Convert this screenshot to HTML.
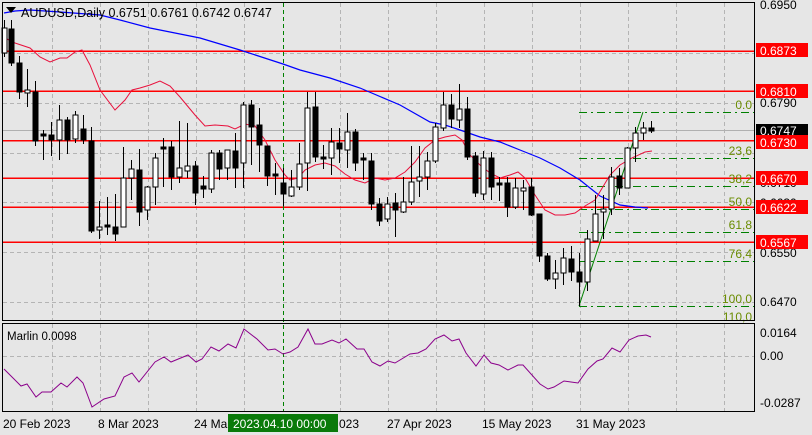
<!DOCTYPE html>
<html><head><meta charset="utf-8"><style>
html,body{margin:0;padding:0;background:#e6e6e6;}
svg{display:block;font-family:"Liberation Sans",sans-serif;}
</style></head><body>
<svg width="812" height="435" viewBox="0 0 812 435" xmlns="http://www.w3.org/2000/svg">
<rect width="812" height="435" fill="#e6e6e6"/>
<g stroke="#b4b4b4" stroke-width="1" stroke-dasharray="4,3" shape-rendering="crispEdges">
<line x1="3" y1="53.5" x2="754" y2="53.5"/><line x1="3" y1="103.5" x2="754" y2="103.5"/><line x1="3" y1="153.5" x2="754" y2="153.5"/><line x1="3" y1="202.5" x2="754" y2="202.5"/><line x1="3" y1="252.5" x2="754" y2="252.5"/><line x1="3" y1="302.5" x2="754" y2="302.5"/>
<line x1="3" y1="356.5" x2="754" y2="356.5"/>
<g>
<line x1="52.5" y1="3" x2="52.5" y2="320"/><line x1="100.5" y1="3" x2="100.5" y2="320"/><line x1="148.5" y1="3" x2="148.5" y2="320"/><line x1="196.5" y1="3" x2="196.5" y2="320"/><line x1="244.5" y1="3" x2="244.5" y2="320"/><line x1="340.5" y1="3" x2="340.5" y2="320"/><line x1="388.5" y1="3" x2="388.5" y2="320"/><line x1="436.5" y1="3" x2="436.5" y2="320"/><line x1="484.5" y1="3" x2="484.5" y2="320"/><line x1="532.5" y1="3" x2="532.5" y2="320"/><line x1="580.5" y1="3" x2="580.5" y2="320"/><line x1="628.5" y1="3" x2="628.5" y2="320"/><line x1="676.5" y1="3" x2="676.5" y2="320"/><line x1="724.5" y1="3" x2="724.5" y2="320"/>
<line x1="52.5" y1="324" x2="52.5" y2="411"/><line x1="100.5" y1="324" x2="100.5" y2="411"/><line x1="148.5" y1="324" x2="148.5" y2="411"/><line x1="196.5" y1="324" x2="196.5" y2="411"/><line x1="244.5" y1="324" x2="244.5" y2="411"/><line x1="340.5" y1="324" x2="340.5" y2="411"/><line x1="388.5" y1="324" x2="388.5" y2="411"/><line x1="436.5" y1="324" x2="436.5" y2="411"/><line x1="484.5" y1="324" x2="484.5" y2="411"/><line x1="532.5" y1="324" x2="532.5" y2="411"/><line x1="580.5" y1="324" x2="580.5" y2="411"/><line x1="628.5" y1="324" x2="628.5" y2="411"/><line x1="676.5" y1="324" x2="676.5" y2="411"/><line x1="724.5" y1="324" x2="724.5" y2="411"/>
</g></g>
<line x1="3" y1="130.5" x2="754" y2="130.5" stroke="#b0b0b0" shape-rendering="crispEdges"/>
<g stroke="#ff0000" stroke-width="1.5" shape-rendering="crispEdges">
<line x1="3" y1="51" x2="754" y2="51"/><line x1="3" y1="91" x2="754" y2="91"/><line x1="3" y1="140.5" x2="754" y2="140.5"/><line x1="3" y1="178" x2="754" y2="178"/><line x1="3" y1="207" x2="754" y2="207"/><line x1="3" y1="242" x2="754" y2="242"/>
</g>
<g stroke="#008000" stroke-width="1" stroke-dasharray="8,4,2,4" shape-rendering="crispEdges">
<line x1="579" y1="112.5" x2="754" y2="112.5"/><line x1="579" y1="158.5" x2="754" y2="158.5"/><line x1="579" y1="186.5" x2="754" y2="186.5"/><line x1="579" y1="209.5" x2="754" y2="209.5"/><line x1="579" y1="232.5" x2="754" y2="232.5"/><line x1="579" y1="261.5" x2="754" y2="261.5"/><line x1="579" y1="306.5" x2="754" y2="306.5"/>
</g>
<line x1="579" y1="306" x2="643" y2="112" stroke="#008000" stroke-width="1"/>
<g fill="#6a8c00" font-size="12" text-anchor="end">
<text x="752" y="109">0.0</text><text x="752" y="155">23,6</text><text x="752" y="183">38,2</text><text x="752" y="206">50,0</text><text x="752" y="229">61,8</text><text x="752" y="258">76,4</text><text x="752" y="303">100,0</text><text x="752" y="321">110,0</text>
</g>
<polyline fill="none" stroke="#0000ff" stroke-width="1.2" points="4,13 15,11 30,10 60,12 100,15 120,20 150,28 200,38 240,50 283,64 300,70 330,78 360,88 400,105 430,122 445,125 460,130 480,137 500,142 520,150 540,158 560,168 580,180 600,196 620,205 635,207 648,208"/>
<polyline fill="none" stroke="#e8103c" stroke-width="1" points="5,38 15,43 30,48 40,57 50,62 60,58 67,58 75,52 82,50 90,65 100,90 115,110 125,100 132,90 140,88 150,85 160,81 170,86 180,97 195,115 205,126 215,125 228,126 235,129 245,124 255,126 265,140 275,160 285,175 290,180 298,178 305,170 315,165 325,163 335,166 345,174 355,180 365,183 375,178 385,180 395,178 405,172 415,162 425,148 435,140 445,137 455,135 462,140 470,155 480,165 490,173 500,178 510,175 518,172 525,178 535,195 545,210 555,215 565,215 575,213 585,206 595,200 610,175 620,165 632,158 645,152 652,151"/>
<line x1="283.5" y1="3" x2="283.5" y2="412" stroke="#008000" stroke-dasharray="4,3" shape-rendering="crispEdges"/>
<g stroke="#000" stroke-width="1" shape-rendering="crispEdges">
<path d="M4.5 20V57M11.5 20V66M19.5 56V99M27.5 69V107M35.5 81V146M43.5 130V160M51.5 122V156M59.5 105V160M67.5 117V154M75.5 111V143M83.5 115V144M91.5 127V233M99.5 201V239M107.5 197V235M115.5 194V241M123.5 147V227M131.5 160V200M139.5 149V226M147.5 186V220M155.5 153V205M163.5 138V187M171.5 141V190M179.5 121V183M187.5 123V178M195.5 161V205M203.5 176V198M211.5 150V193M219.5 150V180M227.5 150V180M235.5 133V188M243.5 102V188M251.5 100V165M259.5 108V172M267.5 147V186M275.5 163V195M283.5 168V206M291.5 170V197M299.5 143V190M307.5 92V191M315.5 92V162M323.5 145V169M331.5 128V175M339.5 128V163M347.5 113V168M355.5 129V171M363.5 153V180M371.5 153V210M379.5 198V226M387.5 197V222M395.5 193V237M403.5 177V213M411.5 146V205M419.5 146V197M427.5 152V190M435.5 123V163M443.5 92V131M451.5 94V128M459.5 84V128M467.5 97V160M475.5 152V197M483.5 151V200M491.5 152V200M499.5 177V201M507.5 177V217M515.5 178V209M523.5 180V210M531.5 178V216M539.5 214V262M547.5 253V281M555.5 260V289M563.5 248V285M571.5 246V281M579.5 253V306M587.5 230V291M595.5 195V241M603.5 195V239M611.5 167V215M619.5 168V195M627.5 147V188M635.5 127V162M643.5 122V140M651.5 121V133"/>
<g fill="#fff">
<rect x="2" y="28" width="5" height="25"/><rect x="25" y="90" width="5" height="3"/><rect x="57" y="120" width="5" height="20"/><rect x="73" y="115" width="5" height="24"/><rect x="97" y="227" width="5" height="3"/><rect x="121" y="178" width="5" height="49"/><rect x="129" y="169" width="5" height="9"/><rect x="145" y="187" width="5" height="23"/><rect x="153" y="158" width="5" height="29"/><rect x="177" y="168" width="5" height="9"/><rect x="185" y="166" width="5" height="5"/><rect x="209" y="153" width="5" height="36"/><rect x="225" y="150" width="5" height="18"/><rect x="241" y="105" width="5" height="58"/><rect x="289" y="187" width="5" height="9"/><rect x="297" y="164" width="5" height="23"/><rect x="305" y="108" width="5" height="55"/><rect x="329" y="142" width="5" height="16"/><rect x="345" y="132" width="5" height="18"/><rect x="385" y="204" width="5" height="15"/><rect x="401" y="202" width="5" height="10"/><rect x="409" y="182" width="5" height="20"/><rect x="417" y="177" width="5" height="4"/><rect x="425" y="161" width="5" height="16"/><rect x="433" y="127" width="5" height="34"/><rect x="441" y="105" width="5" height="23"/><rect x="457" y="109" width="5" height="11"/><rect x="481" y="158" width="5" height="36"/><rect x="513" y="188" width="5" height="19"/><rect x="521" y="188" width="5" height="3"/><rect x="553" y="273" width="5" height="6"/><rect x="561" y="258" width="5" height="15"/><rect x="585" y="239" width="5" height="43"/><rect x="593" y="214" width="5" height="27"/><rect x="601" y="209" width="5" height="3"/><rect x="609" y="177" width="5" height="32"/><rect x="625" y="148" width="5" height="40"/><rect x="633" y="133" width="5" height="15"/><rect x="641" y="128" width="5" height="5"/>
</g>
<g fill="#000">
<rect x="9" y="29" width="5" height="34"/><rect x="17" y="63" width="5" height="29"/><rect x="33" y="92" width="5" height="49"/><rect x="41" y="134" width="5" height="2"/><rect x="49" y="135" width="5" height="5"/><rect x="65" y="120" width="5" height="20"/><rect x="81" y="129" width="5" height="11"/><rect x="89" y="141" width="5" height="90"/><rect x="105" y="225" width="5" height="2"/><rect x="113" y="227" width="5" height="7"/><rect x="137" y="170" width="5" height="42"/><rect x="161" y="147" width="5" height="2"/><rect x="169" y="147" width="5" height="30"/><rect x="193" y="166" width="5" height="27"/><rect x="201" y="186" width="5" height="3"/><rect x="217" y="153" width="5" height="16"/><rect x="233" y="151" width="5" height="17"/><rect x="249" y="105" width="5" height="22"/><rect x="257" y="125" width="5" height="20"/><rect x="265" y="146" width="5" height="30"/><rect x="273" y="174" width="5" height="2"/><rect x="281" y="183" width="5" height="11"/><rect x="313" y="107" width="5" height="50"/><rect x="321" y="157" width="5" height="2"/><rect x="337" y="143" width="5" height="6"/><rect x="353" y="132" width="5" height="31"/><rect x="361" y="158" width="5" height="2"/><rect x="369" y="161" width="5" height="43"/><rect x="377" y="204" width="5" height="17"/><rect x="393" y="203" width="5" height="7"/><rect x="449" y="105" width="5" height="14"/><rect x="465" y="109" width="5" height="48"/><rect x="473" y="156" width="5" height="37"/><rect x="489" y="158" width="5" height="29"/><rect x="497" y="183" width="5" height="2"/><rect x="505" y="183" width="5" height="24"/><rect x="529" y="187" width="5" height="28"/><rect x="537" y="214" width="5" height="42"/><rect x="545" y="256" width="5" height="23"/><rect x="569" y="259" width="5" height="13"/><rect x="577" y="272" width="5" height="10"/><rect x="617" y="176" width="5" height="12"/><rect x="649" y="128" width="5" height="3"/>
</g></g>
<g fill="none" stroke="#000" stroke-width="1" shape-rendering="crispEdges">
<rect x="2.5" y="2.5" width="752" height="318"/>
<rect x="2.5" y="323.5" width="752" height="88"/>
</g>
<path d="M6 7h10l-5 6z" fill="#000"/>
<text x="21" y="17" font-size="12.5" fill="#000">AUDUSD,Daily  0.6751 0.6761 0.6742 0.6747</text>
<g font-size="12" fill="#000">
<text x="760" y="9">0.6950</text><text x="760" y="107">0.6790</text><text x="760" y="187">0.6710</text><text x="760" y="207">0.6630</text><text x="760" y="257">0.6550</text><text x="760" y="306">0.6470</text>
</g>
<g shape-rendering="crispEdges">
<rect x="756" y="43" width="52" height="14" fill="#ff0000"/><rect x="756" y="84" width="52" height="14" fill="#ff0000"/><rect x="756" y="124" width="52" height="13" fill="#000"/><rect x="756" y="135" width="52" height="14" fill="#ff0000"/><rect x="756" y="171" width="52" height="14" fill="#ff0000"/><rect x="756" y="200" width="52" height="14" fill="#ff0000"/><rect x="756" y="235" width="52" height="14" fill="#ff0000"/>
</g>
<g font-size="12" fill="#fff">
<text x="760" y="55">0.6873</text><text x="760" y="96">0.6810</text><text x="760" y="135">0.6747</text><text x="760" y="147">0.6730</text><text x="760" y="183">0.6670</text><text x="760" y="212">0.6622</text><text x="760" y="247">0.6567</text>
</g>
<text x="7" y="340" font-size="11.5" fill="#000">Marlin 0.0098</text>
<polyline fill="none" stroke="#8b008b" stroke-width="1" points="4,369 21,386 27,384 36,397 42,392 51,392 61,383 67,387 77,377 83,383 92,407 104,399 115,396 124,377 132,373 139,382 155,362 164,357 171,362 188,355 196,362 202,359 211,347 219,351 228,344 236,348 244,329 257,339 268,350 275,349 283,354 290,352 298,347 308,329 315,344 322,344 332,340 339,343 346,339 357,349 364,349 372,362 380,366 388,361 395,363 410,354 418,353 426,349 435,339 444,335 452,341 459,339 466,353 476,366 484,355 491,363 499,365 508,370 518,365 523,365 540,384 548,389 554,387 564,381 571,382 578,383 588,369 597,361 603,359 612,348 620,352 629,340 638,336 646,335 651,337"/>
<g font-size="12" fill="#000">
<text x="760" y="337">0.0164</text><text x="760" y="360">0.00</text><text x="760" y="407">-0.0287</text>
</g>
<g font-size="12" fill="#000">
<text x="3" y="428">20 Feb 2023</text><text x="98" y="428">8 Mar 2023</text><text x="194" y="428">24 Ma</text><text x="339" y="428">023</text><text x="387" y="428">27 Apr 2023</text><text x="482" y="428">15 May 2023</text><text x="576" y="428">31 May 2023</text>
</g>
<rect x="228" y="414" width="110" height="18" fill="#0a7a0a"/>
<text x="233" y="428" font-size="12" fill="#fff">2023.04.10 00:00</text>
</svg>
</body></html>
